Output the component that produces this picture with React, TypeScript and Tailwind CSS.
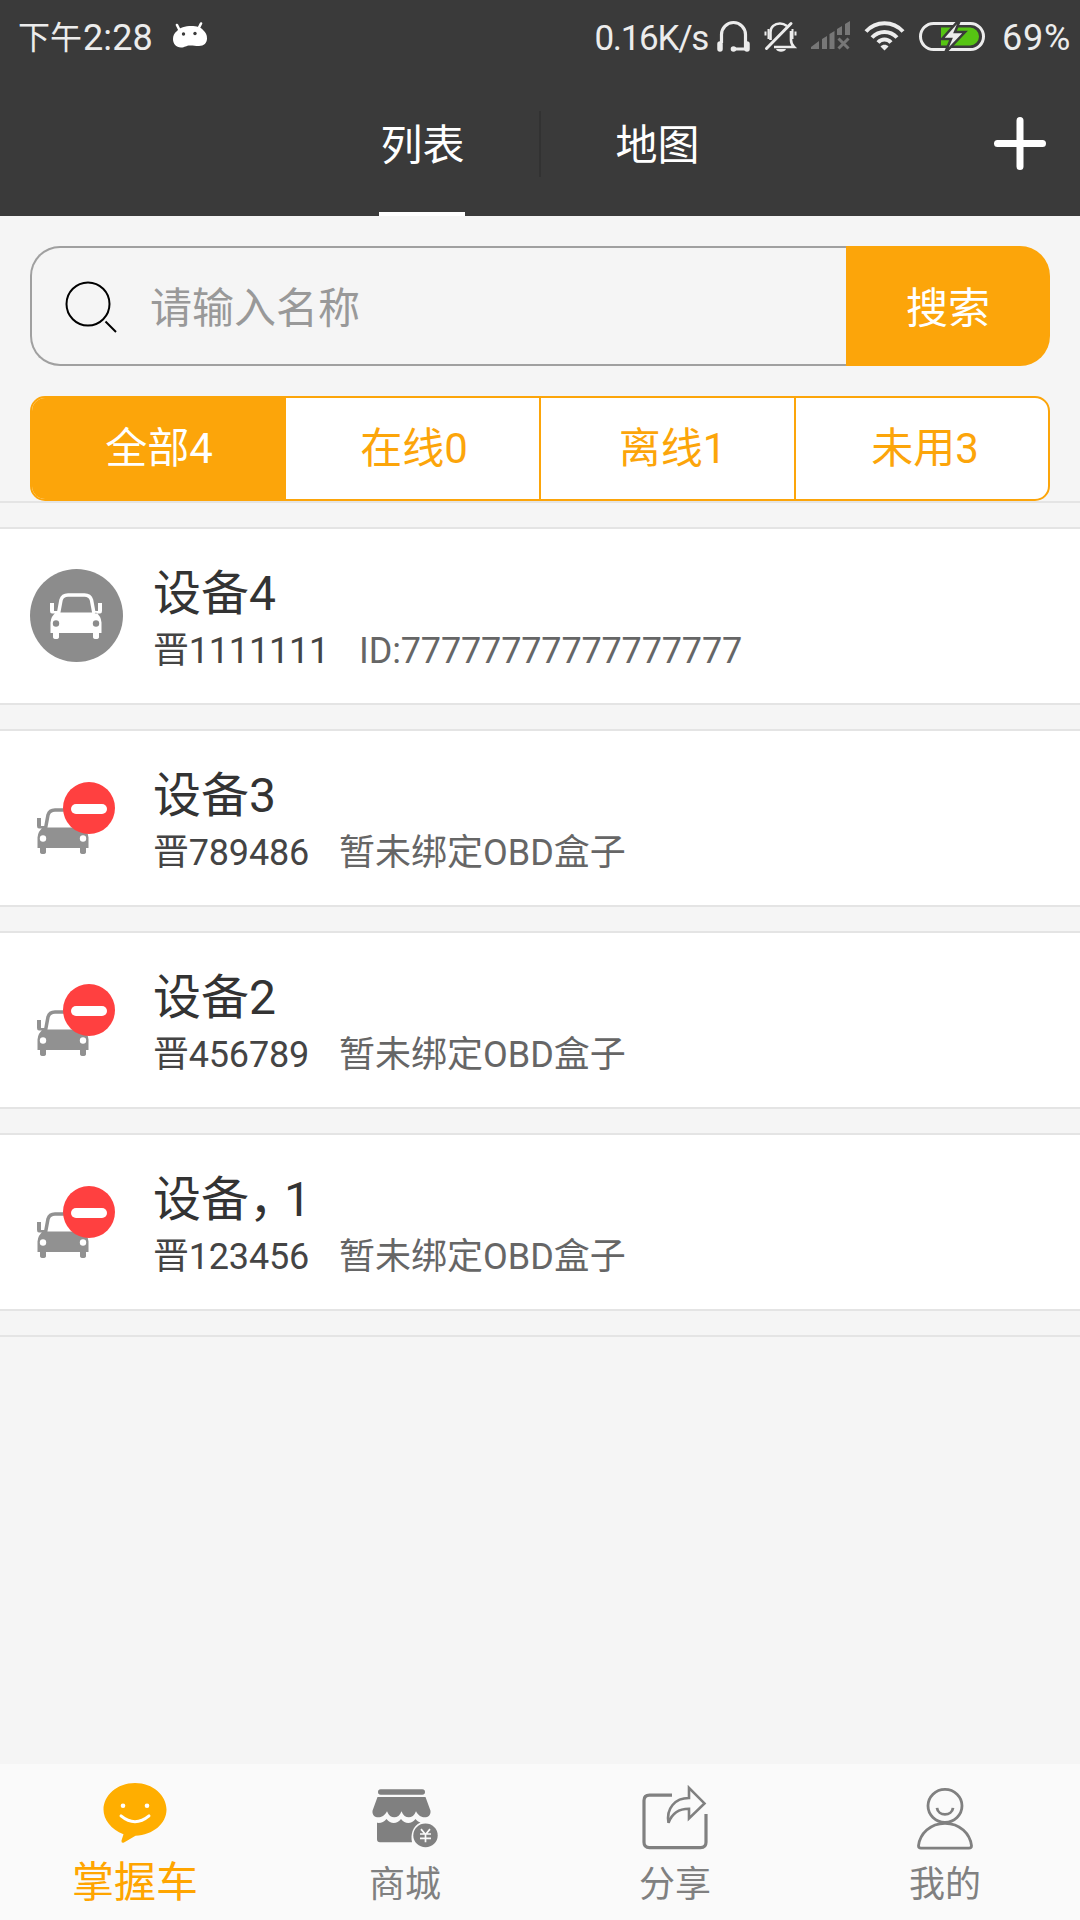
import type { ReactNode } from "react";

type Device = {
  name: ReactNode;
  plate: string;
  note: string;
  bound: boolean;
};

const DEVICES: Device[] = [
  { name: "设备4", plate: "晋1111111", note: "ID:77777777777777777", bound: true },
  { name: "设备3", plate: "晋789486", note: "暂未绑定OBD盒子", bound: false },
  { name: "设备2", plate: "晋456789", note: "暂未绑定OBD盒子", bound: false },
  {
    name: (
      <>
        设备<span className="tracking-[-13px]">，</span>1
      </>
    ),
    plate: "晋123456",
    note: "暂未绑定OBD盒子",
    bound: false,
  },
];

const FILTERS = [
  { label: "全部4", className: "bg-[#fca50a] pl-[2px] text-white" },
  { label: "在线0", className: "pl-[3px] text-[#fca50a]" },
  { label: "离线1", className: "pl-[10px] text-[#fca50a]" },
  { label: "未用3", className: "pl-[6px] text-[#fca50a]" },
];

export default function App() {
  return (
    <div className="flex h-[1920px] w-[1080px] flex-col overflow-hidden bg-[#f5f5f5] font-[Roboto,'Noto_Sans_CJK_SC',sans-serif] whitespace-nowrap">
      <header className="h-[216px] bg-[#3a3a3a]">
        <StatusBar />
        <TopTabs />
      </header>

      <SearchBar />
      <FilterTabs />

      <main className="flex flex-1 flex-col">
        <div className="h-[26px] border-t-2 border-[#e4e4e4]" />
        {DEVICES.map((device) => (
          <DeviceRow key={device.plate} device={device} />
        ))}
        <div className="border-t-2 border-[#e4e4e4]" />
      </main>

      <BottomNav />
    </div>
  );
}

/* ── Status bar ────────────────────────────────────────────────────────── */

function StatusBar() {
  return (
    <div className="flex h-[72px] items-center pr-[9px] pl-[18px] text-[36px] text-[#ececec]">
      <div className="flex items-center pt-[5px] leading-[67px]">
        <span className="text-[32px]">下午</span>
        <span className="ml-px tracking-[0.1px]">2:28</span>
      </div>
      <svg className="-mt-[2px] ml-5 h-[26px] w-[34px]" viewBox="0 0 34 26">
        <path d="M4 3l3 6M28 1.500l-3 6" stroke="#fff" strokeWidth="2.600" strokeLinecap="round" />
        <path
          d="M4 9C8 3 26 2 30 8c3 3 4 5 4 8.500 0 4.500-3 7.500-8 7.500-4 0-5-.5-9-.5S12 25.500 8 25.500c-5 0-8-4-8-8.500 0-3 1-6 4-8Z"
          fill="#fff"
        />
        <circle cx="10.500" cy="12" r="1.700" fill="#3a3a3a" />
        <circle cx="22" cy="11.500" r="1.700" fill="#3a3a3a" />
      </svg>

      <span className="ml-auto pt-[5px] text-[35px] leading-[67px] tracking-[-1.300px]">0.16K/s</span>
      <StatusIcons />
      <span className="ml-4 pt-[5px] leading-[67px] tracking-[0.700px]">69%</span>
    </div>
  );
}

function StatusIcons() {
  return (
    <svg className="ml-2 h-[32px] w-[270px]" viewBox="716 20 270 32" fill="none">
      {/* headset */}
      <g stroke="#ececec" strokeWidth="3.200">
        <path d="M721.500 43V34.500a12 12 0 0 1 24 0V49H734" />
        <path d="M720 44v5M747 44v5" strokeWidth="5.500" strokeLinecap="round" />
      </g>
      <circle cx="733.500" cy="49" r="2.800" fill="#ececec" />

      {/* muted bell */}
      <g stroke="#ececec" strokeWidth="2.600">
        <path d="M770.500 40V32c0-5 4-8.500 9.500-8.500 3 0 5 1 7 2.500M774 47h20c-2-2-3-4-3-7V31" />
        <path d="M766.500 48.500L791 23.500" strokeWidth="3" strokeLinecap="round" />
        <path d="M768.500 29v10M765.500 31.500v4M792.500 29v10M795.500 31.500v4" strokeWidth="2" />
      </g>
      <path d="M776 49h10c-1 3.500-9 3.500-10 0Z" fill="#ececec" />

      {/* mobile signal, no service */}
      <g fill="#777">
        <path d="M811 49v-2l8-6v8ZM822 49V39l5-3v13ZM829.500 49V34l5-3v18ZM837 35v-6l5-3v9ZM845 35V24l5-3v14Z" />
        <path d="M838.500 38.500l10 10M848.500 38.500l-10 10" stroke="#777" strokeWidth="3" />
      </g>

      {/* wifi */}
      <g stroke="#ececec" strokeWidth="4">
        <path d="M866 31.500C876 20.500 893 20.500 903 31.500" />
        <path d="M872 37.500C879 30 890 30 897 37.500" />
        <path d="M878 42.500C881.500 38.500 887.500 38.500 891 42.500" />
      </g>
      <path d="M880.500 46.500c2-2.500 6-2.500 8 0l-4 4Z" fill="#ececec" />

      {/* battery */}
      <rect x="920.500" y="23.500" width="63" height="26" rx="13" stroke="#ececec" strokeWidth="3" />
      <path d="M941 27.500h29a9 9 0 0 1 0 18h-29Z" fill="#56c413" />
      <path
        d="M959 20L942 39h9l-6 14 20-21h-10l5-12Z"
        fill="#ececec"
        stroke="#3a3a3a"
        strokeWidth="2.500"
      />
    </svg>
  );
}

/* ── Header tabs ───────────────────────────────────────────────────────── */

function TopTabs() {
  return (
    <div className="grid h-[144px] grid-cols-[304px_236px_236px_304px] text-[42px] text-white">
      <div />
      <div className="flex justify-center">
        <div className="h-[144px] border-b-4 border-white pt-[4px] pl-px leading-[140px]">列表</div>
      </div>
      <div className="flex items-center">
        <div className="-ml-px h-[66px] w-[2px] bg-[#323232]" />
        <span className="flex-1 pt-[4px] pr-[2px] text-center leading-[140px]">地图</span>
      </div>
      <div className="flex justify-end pt-[44px] pr-[33px]">
        <svg className="size-[54px]" viewBox="0 0 54 54">
          <path d="M27 4.500v46M4.500 27.500h45" stroke="#fff" strokeWidth="7" strokeLinecap="round" />
        </svg>
      </div>
    </div>
  );
}

/* ── Search and filters ────────────────────────────────────────────────── */

function SearchBar() {
  return (
    <div className="mx-[30px] mt-[30px] flex h-[120px] text-[42px]">
      <div className="flex flex-1 items-center rounded-l-[30px] border-2 border-r-0 border-[#a0a0a0] pl-[33px] text-[#999]">
        <svg className="size-[54px]" viewBox="0 0 54 54" fill="none" stroke="#000" strokeWidth="2">
          <circle cx="23" cy="25" r="21.500" />
          <path d="M40.500 42.500l10.500 10.500" />
        </svg>
        <span className="ml-[31px] pt-[4px]">请输入名称</span>
      </div>
      <button className="w-[204px] rounded-r-[30px] bg-[#fca50a] pt-[4px] text-white">搜索</button>
    </div>
  );
}

function FilterTabs() {
  return (
    <div className="mx-[30px] mt-[30px] grid h-[105px] grid-cols-[254px_255px_255px_1fr] divide-x-2 divide-[#fca50a] overflow-hidden rounded-[15px] border-2 border-[#fca50a] bg-white text-[42px]">
      {FILTERS.map(({ label, className }) => (
        <button key={label} className={className}>
          {label}
        </button>
      ))}
    </div>
  );
}

/* ── Device list ───────────────────────────────────────────────────────── */

function DeviceRow({ device }: { device: Device }) {
  return (
    <div className="mb-6 flex h-[178px] items-start border-y-2 border-[#e4e4e4] bg-white pt-10 pl-[30px]">
      {device.bound ? <BoundCar /> : <UnboundCar />}
      <div className="-mt-[3px] ml-[30px]">
        <div className="text-[48px] leading-[56px] text-[#333]">{device.name}</div>
        <div className="flex gap-[30px] text-[36px] leading-[58px] text-[#444]">
          <span className="tracking-[-0.200px]">{device.plate}</span>
          <span className={device.bound ? "tracking-[-0.150px] text-[#666]" : "text-[#666]"}>{device.note}</span>
        </div>
      </div>
    </div>
  );
}

function Car({ body, lamp }: { body: string; lamp: string }) {
  return (
    <>
      <path d="M8.500 20.500 11 7Q12.500 2 18 2H34.500Q40 2 41.500 7L44 20.500" fill="none" stroke={body} strokeWidth="3.500" />
      <path
        d="M0 10h4v8h5l-2 2.500H2Q0 20.500 0 18ZM52 10h-4v8h-5l2 2.500h5Q52 20.500 52 18ZM6 19.500h40q5 3.500 5.500 10V40H49v4q0 2-3 2t-3-2v-4H9v4q0 2-3 2t-3-2v-4H.500V29.500Q1 23 6 19.500Z"
        fill={body}
      />
      <circle cx="6" cy="30.500" r="3.200" fill={lamp} />
      <circle cx="46" cy="30.500" r="3.200" fill={lamp} />
    </>
  );
}

function BoundCar() {
  return (
    <svg className="size-[93px]" viewBox="0 0 93 93">
      <circle cx="46.500" cy="46.500" r="46.500" fill="#8c8c8c" />
      <g transform="translate(20 24)">
        <Car body="#fff" lamp="#8c8c8c" />
      </g>
    </svg>
  );
}

function UnboundCar() {
  return (
    <svg className="size-[93px]" viewBox="0 0 93 93">
      <g transform="translate(7 37)">
        <Car body="#919191" lamp="#fff" />
      </g>
      <circle cx="59" cy="37" r="26" fill="#ff4040" />
      <rect x="41" y="33" width="36" height="10" rx="5" fill="#fff" />
    </svg>
  );
}

/* ── Bottom navigation ─────────────────────────────────────────────────── */

function BottomNav() {
  return (
    <nav className="grid h-[156px] grid-cols-4 bg-[#fafafa] text-[36px] text-[#808080]">
      <div className="flex flex-col items-center pt-[18px] text-[42px] text-[#ffa500]">
        <ChatIcon />
        <span className="mt-[8px] leading-[62px]">掌握车</span>
      </div>
      <NavItem label="商城" icon={<ShopIcon />} />
      <NavItem label="分享" icon={<ShareIcon />} />
      <NavItem label="我的" icon={<UserIcon />} />
    </nav>
  );
}

function NavItem({ label, icon }: { label: string; icon: ReactNode }) {
  return (
    <div className="flex flex-col items-center pt-5">
      {icon}
      <span className="mt-2 leading-[54px]">{label}</span>
    </div>
  );
}

function ChatIcon() {
  return (
    <svg className="h-[62px] w-[66px]" viewBox="0 0 66 64" preserveAspectRatio="none">
      <path
        d="M33 1C51 1 64.500 14 64.500 28.500S51 55 33.500 55.500L22 62.500q-3 1-2.500-2L21.500 54C9 49 1.500 39 1.500 28.500 1.500 14 15 1 33 1Z"
        fill="#ffae00"
      />
      <circle cx="21" cy="24.500" r="2.300" fill="#fff" />
      <circle cx="45" cy="24.500" r="2.300" fill="#fff" />
      <path d="M19 35q14 12 28 0" fill="none" stroke="#fff" strokeWidth="3" strokeLinecap="round" />
    </svg>
  );
}

function ShopIcon() {
  return (
    <svg className="h-[66px] w-[68px]" viewBox="0 0 68 68" preserveAspectRatio="none" fill="#808080">
      <rect x="7" y="5.500" width="47" height="5.500" rx="2.700" />
      <path d="M6.500 13.500h48l5 14c1 8-10 10-14.500.5-3 8.500-11.500 8.500-14.500 0-3 8.500-11.500 8.500-14.500 0C11.500 37.500.500 35.500 1.500 27.500Z" />
      <path d="M6 40c4 .5 7-1 9.500-4 4 5.500 10.500 5.500 14.500 0 4 5.500 10.500 5.500 14.500 0 1.500 2 3 3 5 3.700-8 3.800-10 12-8.500 20.300H9q-3 0-3-3Z" />
      <circle cx="54.500" cy="53" r="12.200" />
      <path d="M50 46.500l4.500 5.500 4.500-5.500M49 51.500h11M49 56h11M54.500 52v8" fill="none" stroke="#fafafa" strokeWidth="1.700" />
    </svg>
  );
}

function ShareIcon() {
  return (
    <svg
      className="h-[66px] w-[68px]"
      viewBox="0 0 68 68"
      preserveAspectRatio="none"
      fill="none"
      stroke="#808080"
      strokeWidth="3.200"
    >
      <path d="M31 11.500H8.500q-5.500 0-5.500 5.500V60q0 5.500 5.500 5.500h51q5.500 0 5.500-5.500V31" />
      <path d="M48 4v10.500C34 14.500 25 25 27.500 40 31 30 39 25.500 48 25.500V35.500L63.500 20Z" strokeWidth="2.600" />
    </svg>
  );
}

function UserIcon() {
  return (
    <svg
      className="h-[66px] w-[68px]"
      viewBox="0 0 68 68"
      preserveAspectRatio="none"
      fill="none"
      stroke="#808080"
      strokeWidth="2.800"
    >
      <circle cx="34" cy="22.500" r="17" />
      <path d="M26 24.500c1 9 15 9 16 0" />
      <path d="M34 40.500c-15 0-25 11-26.500 23q0 2.500 2.500 2.500h48q2.500 0 2.500-2.500C59 51.500 49 40.500 34 40.500Z" />
    </svg>
  );
}
